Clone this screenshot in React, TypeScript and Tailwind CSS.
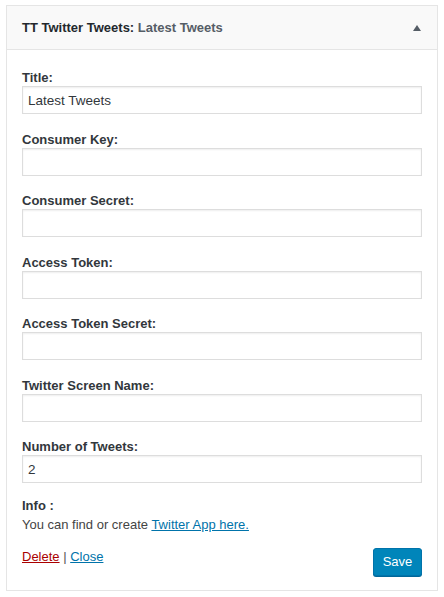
const fields = [
  { label: 'Title:', value: 'Latest Tweets' },
  { label: 'Consumer Key:', value: '' },
  { label: 'Consumer Secret:', value: '' },
  { label: 'Access Token:', value: '' },
  { label: 'Access Token Secret:', value: '' },
  { label: 'Twitter Screen Name:', value: '' },
  { label: 'Number of Tweets:', value: '2' },
];

export default function App() {
  return (
    <div className="bg-white min-h-[597px] pt-[5px] px-[6px] font-['Liberation_Sans',Arial,sans-serif] text-[13px] text-[#444]">
      <div className="w-[432px] border border-[#e5e5e5] bg-white">
        {/* widget header */}
        <div className="h-[44px] bg-[#f9f9f9] border-b border-[#e5e5e5] flex items-center justify-between pl-[15px] pr-[16px]">
          <h3 className="text-[13px] font-bold text-[#23282d] leading-none">
            TT Twitter Tweets: <span className="text-[#555d66]">Latest Tweets</span>
          </h3>
          <svg width="8" height="6" viewBox="0 0 8 6" className="mt-[1px]">
            <polygon points="4,0 8,6 0,6" fill="#555d66" />
          </svg>
        </div>

        {/* widget body */}
        <div className="px-[15px] pt-[18px] pb-[14px]">
          <div className="flex flex-col gap-[15.5px]">
            {fields.map((f) => (
              <div key={f.label}>
                <label className="block h-[18px] pt-[2px] leading-[16px] font-bold text-[#32373c]">{f.label}</label>
                <input
                  type="text"
                  defaultValue={f.value}
                  className="block w-full h-[28px] px-[5px] border border-[#ddd] bg-white text-[13.5px] text-[#32373c] shadow-[inset_0_1px_2px_rgba(0,0,0,0.07)] outline-none"
                />
              </div>
            ))}
          </div>

          <div className="mt-[14px] leading-[18px]">
            <div className="font-bold text-[#32373c]">Info :</div>
            <div className="mt-[1px]">
              You can find or create{' '}
              <a href="#" className="text-[#0073aa] underline">Twitter App here.</a>
            </div>
          </div>

          <div className="mt-[14px] flex items-start justify-between">
            <div className="leading-[18px]">
              <a href="#" className="text-[#a00] underline">Delete</a>
              <span className="text-[#555]"> | </span>
              <a href="#" className="text-[#0073aa] underline">Close</a>
            </div>
            <button className="h-[28px] w-[49px] rounded-[3px] bg-[#0085ba] border border-[#0073aa] text-white text-[13px] leading-[26px] shadow-[0_1px_0_#006799]">
              Save
            </button>
          </div>
        </div>
      </div>
    </div>
  );
}
